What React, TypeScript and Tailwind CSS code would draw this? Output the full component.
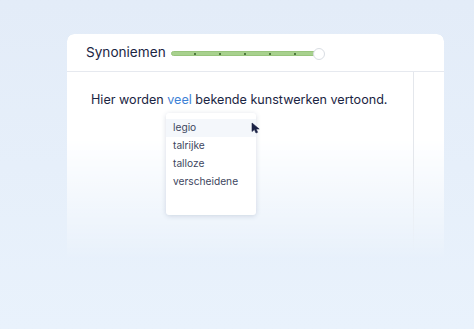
import React from "react";

export default function App() {
  const dots = [0, 1, 2, 3, 4];
  const items = ["legio", "talrijke", "talloze", "verscheidene"];
  return (
    <div
      className="w-[474px] h-[329px] overflow-hidden bg-gradient-to-b from-[#e3ecf8] to-[#e9f2fc] pt-[34px] pl-[67px]"
      style={{ fontFamily: "Inter, 'Noto Sans', sans-serif" }}
    >
      <div className="relative w-[377px] h-[228px]">
        <div className="absolute inset-0 rounded-t-[7px] bg-white shadow-[0_0_24px_rgba(120,160,210,0.28)] [mask-image:linear-gradient(to_bottom,black_0%,black_45%,rgba(0,0,0,0.2)_90%,transparent_100%)]" />
        <div className="relative">
          <div className="h-[38px] flex items-center pl-[19px] border-b border-[#e6e9ef]">
            <span className="text-[13.6px] text-[#1b2543]">Synoniemen</span>
            <div className="relative ml-[5px] w-[148px] h-[12px] flex items-center mt-[2px]">
              <div className="h-[5px] w-[146px] rounded-full bg-[#a8d18e] border border-[#98c47c] flex items-center">
                {dots.map((d) => (
                  <div key={d} className={`w-[2px] h-[2px] rounded-full bg-[#2f5a22] ${d === 0 ? "ml-[22px]" : "ml-[23px]"}`} />
                ))}
              </div>
              <div className="absolute right-[-6px] top-0 w-[12px] h-[12px] rounded-full bg-white border border-[#d9dde3]" />
            </div>
          </div>
          <div className="flex h-[182px]">
            <div className="w-[346px] pl-[24px] pt-[20px] relative">
              <p className="text-[12.6px] text-[#1b2543] leading-[16px] whitespace-nowrap">
                Hier worden <span className="text-[#3e82d6]">veel</span> bekende kunstwerken vertoond.
              </p>
              <div className="absolute left-[99px] top-[41px] w-[90px] h-[102px] bg-white rounded-[3px] shadow-[0_1px_5px_rgba(60,80,120,0.2)] pt-[6px]">
                {items.map((it, i) => (
                  <div
                    key={it}
                    className={`h-[18px] flex items-center pl-[7px] text-[10.2px] text-[#3d4660] ${i === 0 ? "bg-[#f4f7fb]" : ""}`}
                  >
                    {it}
                  </div>
                ))}
              </div>
              <svg className="absolute left-[184px] top-[50px]" width="10" height="12" viewBox="0 0 10 12">
                <path d="M1 1 L1 9.5 L3.4 7.6 L5 11 L6.6 10.3 L5.1 7 L8.2 7 Z" fill="#1b2245" stroke="#1b2245" strokeWidth="0.6" strokeLinejoin="round" />
              </svg>
            </div>
            <div className="w-px bg-gradient-to-b from-[#e4e7ec] via-[#e4e7ec] to-[#e4e7ec]/0" />
            <div className="flex-1" />
          </div>
        </div>
      </div>
    </div>
  );
}
